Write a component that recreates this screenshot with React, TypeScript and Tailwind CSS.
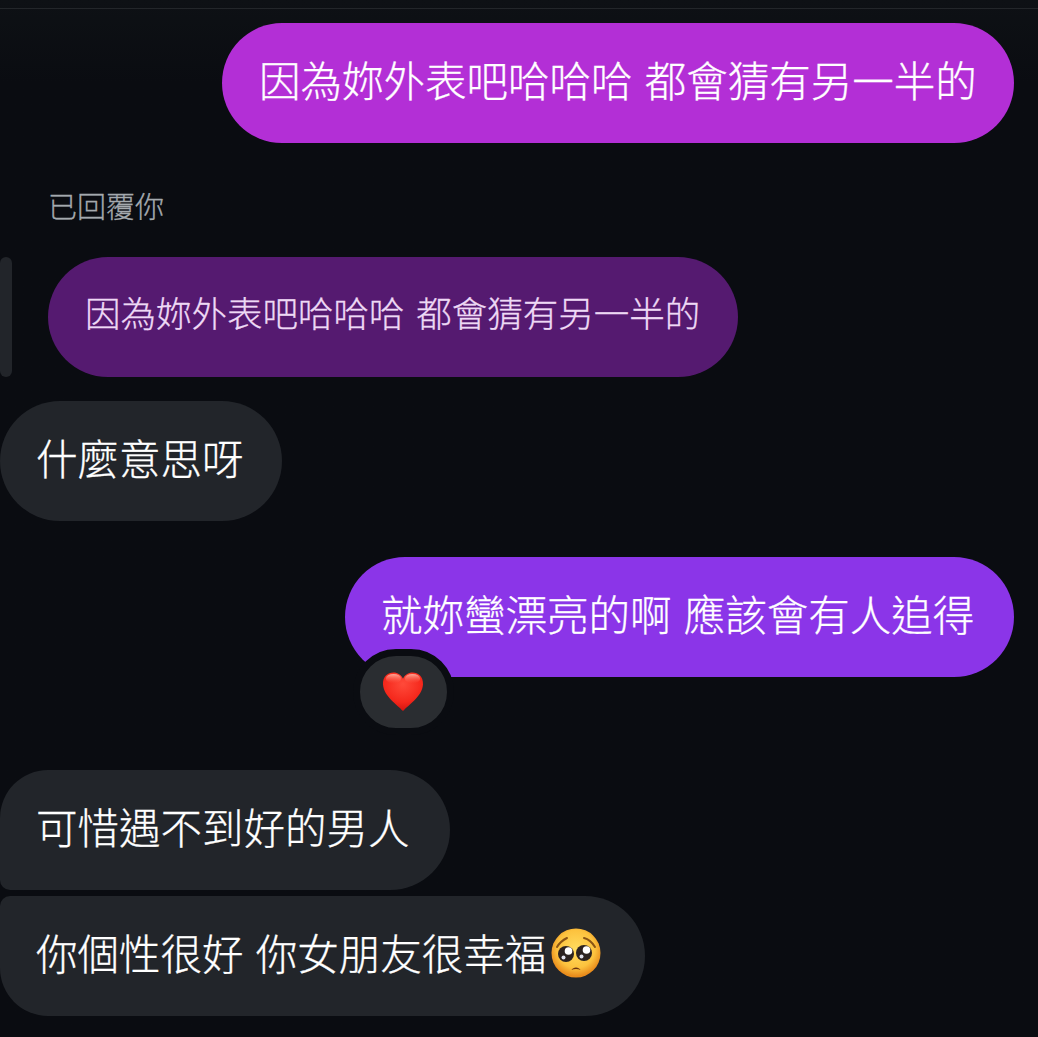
const cjk = "font-['Noto_Sans_CJK_TC','Noto_Sans_CJK_SC',sans-serif]"

const HeartEmoji = () => (
  <svg width="42" height="40" viewBox="0 0 44 42" className="-ml-0.5">
    <defs>
      <radialGradient id="heart" cx="50%" cy="30%" r="72%">
        <stop offset="0%" stopColor="#ff4a3a" />
        <stop offset="65%" stopColor="#f5281c" />
        <stop offset="100%" stopColor="#cf120e" />
      </radialGradient>
      <linearGradient id="heartShine" x1="0" y1="0" x2="0" y2="1">
        <stop offset="0%" stopColor="#ffb8a8" stopOpacity="0.9" />
        <stop offset="100%" stopColor="#ff5a48" stopOpacity="0" />
      </linearGradient>
    </defs>
    <path
      d="M22 41C16 34 2 26 1 13C.5 5 6 .5 12 .5C16.500 .5 20 3 22 7C24 3 27.500 .5 32 .5C38 .5 43.500 5 43 13C42 26 28 34 22 41Z"
      fill="url(#heart)"
    />
    <ellipse cx="12" cy="7" rx="8" ry="5" fill="url(#heartShine)" />
    <ellipse cx="32" cy="7" rx="8" ry="5" fill="url(#heartShine)" />
  </svg>
)

const PleadingEmoji = () => (
  <svg width="50" height="50" viewBox="0 0 50 50" className="ml-[5px] mt-8">
    <defs>
      <radialGradient id="face" cx="50%" cy="42%" r="55%">
        <stop offset="0%" stopColor="#ffdc5e" />
        <stop offset="70%" stopColor="#fcc23e" />
        <stop offset="100%" stopColor="#e98c1c" />
      </radialGradient>
    </defs>
    <circle cx="25" cy="25" r="24.500" fill="url(#face)" />
    <path d="M6 19C9 14 12 12 16 10" stroke="#8a5414" strokeWidth="2" fill="none" strokeLinecap="round" />
    <path d="M33 10C37 11 41 14 44 19" stroke="#8a5414" strokeWidth="2" fill="none" strokeLinecap="round" />
    <circle cx="15" cy="26" r="8" fill="#2c2320" />
    <circle cx="33" cy="25" r="8" fill="#2c2320" />
    <circle cx="17.500" cy="23" r="3.800" fill="#fff" />
    <circle cx="35.500" cy="22" r="3.800" fill="#fff" />
    <circle cx="12.500" cy="29.500" r="2" fill="#dfe0ea" />
    <circle cx="30.500" cy="28.500" r="2" fill="#dfe0ea" />
    <path d="M20.500 42C22 38.500 28 38.500 29.500 42C27 40.800 23 40.800 20.500 42Z" fill="#6a3410" />
  </svg>
)

export default function App() {
  return (
    <div className={`${cjk} h-[1037px] w-[1038px] overflow-hidden bg-linear-to-b from-[#0e1115] to-[#0a0c11] to-[8%] text-[41.5px] font-light leading-[112px] text-white [word-spacing:3px] [-webkit-text-stroke:0.3px]`}>
      <div className="h-[23px]">
        <div className="h-[9px] border-b border-[#23262a]" />
      </div>

      <div className="flex justify-end pr-6">
        <div className="h-[120px] w-[792px] whitespace-pre rounded-[60px] bg-[#b32fd6] pl-[37px]">
          因為妳外表吧哈哈哈 都會猜有另一半的
        </div>
      </div>

      <div className="mt-11 pl-12 text-[29px] leading-[36px] text-[#a4a9ae]">已回覆你</div>

      <div className="mt-[34px] flex gap-9">
        <div className="h-[120px] w-3 rounded-md bg-[#22252a]" />
        <div className="h-[120px] w-[690px] whitespace-pre rounded-[60px] bg-[#551a70] pl-[37px] text-[35.500px] leading-[110px] text-[#eed9f5] [word-spacing:4px]">
          因為妳外表吧哈哈哈 都會猜有另一半的
        </div>
      </div>

      <div className="mt-6 h-[120px] w-[282px] rounded-[60px] bg-[#22252a] pl-9">
        什麼意思呀
      </div>

      <div className="mt-9 flex justify-end pr-6">
        <div className="relative h-[120px] w-[669px] whitespace-pre rounded-[60px] bg-[#8b35e8] pl-9">
          就妳蠻漂亮的啊 應該會有人追得
          <div className="absolute left-2 top-[92px] flex h-[86px] w-[101px] items-center justify-center rounded-[43px] border-[7px] border-[#0a0c11] bg-[#2a2d31]">
            <HeartEmoji />
          </div>
        </div>
      </div>

      <div className="mt-[93px] h-[120px] w-[450px] rounded-tl-[48px] rounded-bl-[10px] rounded-r-[60px] bg-[#22252a] pl-9">
        可惜遇不到好的男人
      </div>

      <div className="mt-1.5 flex h-[120px] w-[645px] items-start whitespace-pre rounded-tl-[10px] rounded-bl-[48px] rounded-r-[60px] bg-[#22252a] pl-9">
        你個性很好 你女朋友很幸福
        <PleadingEmoji />
      </div>
    </div>
  )
}
